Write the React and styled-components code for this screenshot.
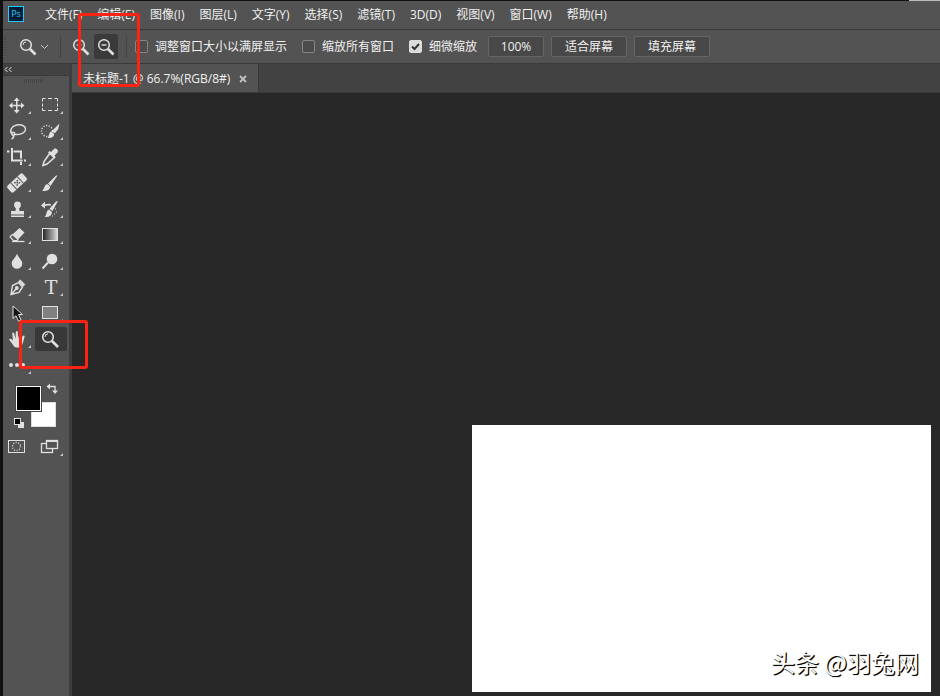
import React, { useState } from 'react'
import styled, { createGlobalStyle } from 'styled-components'

const GlobalStyle = createGlobalStyle`
  * {
    box-sizing: border-box;
  }

  body {
    margin: 0;
    background: #282828;
    color: #f0f0f0;
    font-family: 'Open Sans', 'Noto Sans CJK SC', sans-serif;
    font-size: 12px;
    line-height: 16px;
  }

  button {
    font: inherit;
    color: inherit;
    padding: 0;
    border: 0;
    background: none;
  }

  svg {
    display: block;
  }
`

const AppWindow = styled.div`
  display: flex;
  flex-direction: column;
  position: relative;
  min-height: 100vh;
  border-top: 1px solid #111;
  border-left: 3px solid #111;

  &::before {
    content: '';
    position: absolute;
    top: -1px;
    right: 0;
    width: 31px;
    height: 1px;
    background: #bbb;
  }
`

const MenuBar = styled.nav`
  display: flex;
  align-items: center;
  gap: 15px;
  height: 29px;
  padding: 0 5px 3px;
  background: #535353;
  border-bottom: 1px solid #3a3a3a;
`

const Logo = styled.div`
  width: 16px;
  height: 16px;
  margin-right: 6px;
  border: 1px solid #26c9ff;
  background: #001d33;
  color: #26c9ff;
  font-size: 9px;
  line-height: 14px;
  text-align: center;
`

const MenuItem = styled.button`
  padding-top: 2px;
  white-space: nowrap;
`

const OptionsBar = styled.div`
  display: flex;
  align-items: center;
  height: 34px;
  padding-left: 1px;
  background: #535353;
  border-bottom: 1px solid #3a3a3a;
`

const Grip = styled.div`
  width: 2px;
  height: 20px;
  background: repeating-linear-gradient(#444 0 1px, #5a5a5a 1px 2px);
`

const Separator = styled.div`
  width: 1px;
  height: 22px;
  margin: 0 8px;
  background: #434343;
`

const ZoomButtons = styled.div`
  display: flex;
  gap: 1px;
`

const IconButton = styled.button`
  display: flex;
  align-items: center;
  justify-content: center;
  width: ${props => props.$wide ? '46px' : '24px'};
  height: 25px;
  padding-left: ${props => props.$wide ? '12px' : '0'};
  border-radius: 2px;
  background: ${props => props.$active ? '#3a3a3a' : 'none'};
`

const Option = styled.label`
  display: flex;
  align-items: center;
  gap: 7px;
  margin-right: 15px;
  white-space: nowrap;
`

const Check = styled.input`
  appearance: none;
  width: 13px;
  height: 13px;
  margin: 0;
  border: 1px solid #858585;
  border-radius: 2px;
  background: #4c4c4c;

  &:checked {
    border-color: #dcdcdc;
    background: #dcdcdc url("data:image/svg+xml,%3Csvg xmlns='http://www.w3.org/2000/svg' viewBox='0 0 11 11'%3E%3Cpath d='M2 5.5l2.500 2.500L9 3' fill='none' stroke='%23333' stroke-width='2'/%3E%3C/svg%3E");
  }
`

const OptionButtons = styled.div`
  display: flex;
  gap: 7px;
  margin-left: -4px;
`

const OptionButton = styled.button`
  width: ${props => props.$small ? '56px' : '76px'};
  height: 21px;
  border: 1px solid #666;
  border-radius: 2px;
  background: #484848;
  line-height: 19px;
`

const Main = styled.div`
  display: flex;
  flex: 1;
`

const Sidebar = styled.aside`
  flex: none;
  width: 69px;
  background: #535353;
  border-right: 3px solid #3e3e3e;
`

const SidebarHeader = styled.button`
  display: flex;
  align-items: center;
  width: 100%;
  height: 12px;
  padding-left: 1px;
  background: #424242;
  border-bottom: 1px solid #3a3a3a;
`

const SidebarGrip = styled.div`
  width: 20px;
  height: 4px;
  margin: 3px 0 10px 21px;
  background: repeating-linear-gradient(90deg, #454545 0 1px, #535353 1px 2px);
`

const ToolGrid = styled.div`
  display: grid;
  grid-template-columns: 32px 32px;
  row-gap: 2px;
`

const ToolButton = styled.button`
  height: 24px;
  border-radius: 2px;
  background: ${props => props.$active ? '#383838' : 'none'};
`

const ColorArea = styled.div`
  position: relative;
  height: 58px;
`

const Swatch = styled.button`
  position: absolute;
  width: 25px;
  height: 25px;
  border: 1px solid ${props => props.$front ? '#fff' : '#ddd'};
  background: ${props => props.$front ? '#000' : '#fff'};
  left: ${props => props.$front ? '13px' : '28px'};
  top: ${props => props.$front ? '9px' : '25px'};
  outline: ${props => props.$front ? '1px solid #444' : 'none'};
`

const SwapButton = styled.button`
  position: absolute;
  left: 43px;
  top: 6px;
`

const ResetButton = styled.button`
  position: absolute;
  left: 11px;
  top: 41px;
`

const DocumentArea = styled.main`
  display: flex;
  flex-direction: column;
  flex: 1;
  min-width: 0;
`

const TabStrip = styled.div`
  display: flex;
  height: 29px;
  background: #424242;
  border-bottom: 1px solid #383838;
`

const Tab = styled.div`
  display: flex;
  align-items: center;
  gap: 9px;
  padding: 2px 11px 0;
  background: #535353;
  border-right: 1px solid #393939;
  white-space: nowrap;
`

const Workspace = styled.div`
  display: flex;
  flex: 1;
  align-items: flex-end;
  justify-content: flex-end;
  padding: 0 9px 4px;
  background: #282828;
`

const Artboard = styled.div`
  display: flex;
  align-items: flex-end;
  justify-content: flex-end;
  width: 54%;
  aspect-ratio: 459 / 267;
  padding: 12px;
  background: #fff;
`

const Watermark = styled.span`
  color: #fff;
  font-family: 'Noto Sans CJK SC', sans-serif;
  font-size: 24px;
  line-height: 36px;
  white-space: nowrap;
  text-shadow: 1px 1px 0 #000, 1px 1px 1px #000;
`

const Highlight = styled.div`
  position: absolute;
  left: ${props => props.$left}px;
  top: ${props => props.$top}px;
  width: ${props => props.$width}px;
  height: ${props => props.$height}px;
  border: 3px solid #fb2414;
  border-radius: 3px;
  pointer-events: none;
`

const menus = [
  '文件(F)', '编辑(E)', '图像(I)', '图层(L)', '文字(Y)', '选择(S)',
  '滤镜(T)', '3D(D)', '视图(V)', '窗口(W)', '帮助(H)'
]

const ink = '#e0e0e0'

const Magnifier = ({ sign }) => (
  <svg width="18" height="18" fill="none" stroke={ink}>
    <circle cx="7" cy="7" r="5.300" strokeWidth="1.500" />
    <path d="M11 11l5.500 5.500" strokeWidth="2.600" />
    {sign === 'plus' && <path d="M4.500 7h5M7 4.500v5" />}
    {sign === 'minus' && <path d="M4.500 7h5" strokeWidth="1.400" />}
    {!sign && <path d="M4 7a3 3 0 0 1 3-3" strokeWidth="1" />}
  </svg>
)

// every tool is drawn on the 32x24 face of its button
const tools = [
  ['移动', <g fill={ink}>
    <path d="M13 7h1.500v11H13zM8 11.700h11v1.500H8z" />
    <path d="M13.700 4.500l3 3.500h-6zM13.700 20.500l3-3.500h-6zM6 12.500l3.500-3v6zM21.500 12.500l-3.500-3v6z" />
  </g>],
  ['矩形选框', <path d="M7.500 8.500v-3h3M13 5.500h4M19.500 5.500h3v3M22.500 10.500v3M22.500 15v2.500h-3M17 17.500h-4M10.500 17.500h-3V15M7.500 13.500v-3" fill="none" stroke={ink} />],
  ['套索', <g fill="none" stroke={ink} strokeWidth="1.400">
    <path d="M9 15c-3-3-.5-8 4.500-9 5-1 9 1 9 4 0 4-6 6.500-12 5.200" />
    <path d="M9 15.500a1.500 1.500 0 1 1 2.500 0c-.8 1.200-2.500.5-2.500-.5zM11 16c0 2-1 3.500-2.500 4" />
  </g>],
  ['快速选择', <g>
    <circle cx="12" cy="12" r="5.500" fill="none" stroke={ink} strokeWidth="1.300" strokeDasharray="1.200 1.500" />
    <path d="M24.500 4.500l-1.500 6-3.500 4-2.500-2.500z" fill={ink} />
    <path d="M16.500 12.500l2.500 2.500c.5 3-3 4.500-6.500 4 2-1.500 1-6 4-6.500z" fill={ink} />
  </g>],
  ['裁剪', <g fill="none" stroke={ink} strokeWidth="2">
    <path d="M9 3v12.500h10.500M4 6.500h2.500M10.500 6.500h7.500v7M18 17v3M21 15.500h2" />
  </g>],
  ['吸管', <g>
    <path d="M15 8l4.500 4.500L12 19l-4 1.500 1-4z" fill="none" stroke={ink} strokeWidth="1.600" />
    <path d="M13 7.500l1.500-1.500 1.500 1 3-3c2-1.500 5 1.500 3.500 3.500l-3 3 1 1.500L19 13.500z" fill={ink} />
  </g>],
  ['修复画笔', <g transform="rotate(-43 14 12)">
    <rect x="3.500" y="7.500" width="21" height="9" rx="2" fill={ink} />
    <path d="M9.500 7.500v9M18.500 7.500v9" stroke="#535353" />
    <path d="M12 10.500h1.500M15 10.500h1.500M12 13.500h1.500M15 13.500h1.500M13.500 12H15" stroke="#444" strokeWidth="1.300" />
  </g>],
  ['画笔', <g fill={ink}>
    <path d="M22.500 4.500l-7 10.500-2.500-2.500 8-8z" />
    <path d="M12.500 13l2.500 2.500c.5 3.500-4 5-8 4.500 2.500-1.500 2-6.500 5.500-7z" />
  </g>],
  ['仿制图章', <g fill={ink}>
    <circle cx="14.500" cy="8" r="3.400" />
    <path d="M13 10h3l.5 4H21v3.500H8V14h4.500z" />
    <path d="M8 18.500h13V20H8z" />
  </g>],
  ['历史记录画笔', <g fill={ink}>
    <path d="M23 4l-5.500 10-3-2.200L21 4.500zM14 12.500l3 2.500c0 4-4 5.500-7.500 5 2.500-1.500 1.500-7 4.500-7.500z" />
    <path d="M6 8.500l4-4v2.800c3-.8 5-.8 6 0v1.500c-2-.6-4-.4-6 .2v2.500z" />
    <path d="M20 12h1M21 15h1M19 17h1M17 19h1" stroke={ink} />
  </g>],
  ['橡皮擦', <g>
    <path d="M16.500 5l5 4.500-6.500 7-5.500-5z" fill={ink} />
    <path d="M9.500 11.500l-2.500 2.500 3.500 3.500H14l1-1z" fill="none" stroke={ink} strokeWidth="1.200" />
    <path d="M9 18.500h12.500" stroke={ink} strokeWidth="1.300" />
  </g>],
  ['渐变', <g>
    <linearGradient id="ramp">
      <stop offset="0" stopColor="#222" />
      <stop offset="1" stopColor="#ddd" />
    </linearGradient>
    <rect x="7.500" y="5.500" width="15" height="12" fill="url(#ramp)" stroke={ink} />
  </g>],
  ['模糊', <path d="M14 4.500c1 4 5.300 6.500 5.300 10a5.200 5.200 0 0 1-10.600 0c0-3.500 4.300-6 5.300-10z" fill={ink} />],
  ['减淡', <g>
    <circle cx="17" cy="10" r="5.300" fill={ink} />
    <path d="M13 13.500l-5.500 6" stroke={ink} strokeWidth="2" />
  </g>],
  ['钢笔', <g fill="none" stroke={ink} strokeWidth="1.400">
    <path d="M8 19.500l1.500-9 6-3 4 4.500-3.500 5.500zM8 19.500l5.500-6" />
    <path d="M15.500 6.500l1.700-1.800 4.800 4.800-2 2z" fill={ink} strokeWidth="0.500" />
    <circle cx="13.800" cy="13" r="1.200" fill={ink} />
  </g>],
  ['文字', <text x="16" y="19" textAnchor="middle" fontFamily="DejaVu Serif" fontSize="19" fill={ink}>T</text>],
  ['路径选择', <path d="M10 5v12.500l3-2.800 2.500 5.500 2.500-1.200-2.500-5.500h4z" fill="#151515" stroke={ink} />],
  ['矩形', <rect x="7.500" y="5.500" width="15" height="12" fill="#808080" stroke={ink} />],
  ['抓手', <path d="M11 19.500c-1.500-2-3-5-5-7 .5-1.500 2.500-.8 4 1L9.200 6.500c0-1.500 1.600-1.500 2 0l1.300 5.500L12.800 5c.2-1.500 2-1.500 2 0l.2 7 1.500-6c.4-1.500 2-1 1.800.3L17.500 13l2.300-4c.8-1.200 2.200-.4 1.700 1-1 3-1.500 7-3.500 9.500-1.500 1.300-5.500 1.300-7 0z" fill={ink} />],
  ['缩放', <g fill="none" stroke={ink}>
    <circle cx="13" cy="10" r="5.300" strokeWidth="1.600" />
    <path d="M17 14l6 6" strokeWidth="2.600" />
    <path d="M10 10a3 3 0 0 1 3-3" />
  </g>],
  ['编辑工具栏', <g fill={ink}>
    <circle cx="8" cy="12" r="2" />
    <circle cx="14" cy="12" r="2" />
    <circle cx="20" cy="12" r="2" />
  </g>]
]

const modes = [
  ['快速蒙版', <g fill="none" stroke={ink}>
    <rect x="5.500" y="5.500" width="16" height="12" />
    <circle cx="13.500" cy="11.500" r="4" strokeWidth="1.400" strokeDasharray="1 1.500" />
  </g>],
  ['屏幕模式', <g stroke={ink} strokeWidth="1.300">
    <rect x="6.500" y="8.500" width="11" height="9" fill="none" />
    <rect x="11.500" y="5.500" width="11" height="8" fill="#535353" />
    <path d="M11 6h12" strokeWidth="2" />
  </g>]
]

const Tool = ({ label, active, corner = true, onClick, children }) => (
  <ToolButton aria-label={label} $active={active} onClick={onClick}>
    <svg width="32" height="24">
      {children}
      {corner && <path d="M28 18v3h-3z" fill="#c8c8c8" />}
    </svg>
  </ToolButton>
)

const App = () => {
  const [tool, setTool] = useState('缩放')

  return (
    <>
      <GlobalStyle />
      <AppWindow>
        <MenuBar>
          <Logo>Ps</Logo>
          {menus.map(menu => <MenuItem key={menu}>{menu}</MenuItem>)}
        </MenuBar>

        <OptionsBar>
          <Grip />
          <IconButton $wide aria-label="缩放工具">
            <Magnifier />
            <svg width="14" height="8" fill="none" stroke="#c8c8c8">
              <path d="M4 2l3.500 3.500L11 2" />
            </svg>
          </IconButton>
          <Separator />
          <ZoomButtons>
            <IconButton aria-label="放大"><Magnifier sign="plus" /></IconButton>
            <IconButton $active aria-label="缩小"><Magnifier sign="minus" /></IconButton>
          </ZoomButtons>
          <Separator />
          <Option><Check type="checkbox" />调整窗口大小以满屏显示</Option>
          <Option><Check type="checkbox" />缩放所有窗口</Option>
          <Option><Check type="checkbox" defaultChecked />细微缩放</Option>
          <OptionButtons>
            <OptionButton $small>100%</OptionButton>
            <OptionButton>适合屏幕</OptionButton>
            <OptionButton>填充屏幕</OptionButton>
          </OptionButtons>
        </OptionsBar>

        <Main>
          <Sidebar>
            <SidebarHeader aria-label="折叠">
              <svg width="9" height="7" fill="none" stroke={ink}>
                <path d="M3.500 1L1 3.500 3.500 6M7.500 1L5 3.500 7.500 6" />
              </svg>
            </SidebarHeader>
            <SidebarGrip />
            <ToolGrid>
              {tools.map(([label, icon]) => (
                <Tool
                  key={label}
                  label={label}
                  active={tool === label}
                  corner={label !== '缩放'}
                  onClick={() => setTool(label)}
                >
                  {icon}
                </Tool>
              ))}
            </ToolGrid>
            <ColorArea>
              <Swatch aria-label="背景色" />
              <Swatch $front aria-label="前景色" />
              <SwapButton aria-label="切换颜色">
                <svg width="12" height="12">
                  <path d="M3 3.500h6v5" fill="none" stroke={ink} strokeWidth="1.300" />
                  <path d="M4 .5v6l-3.500-3zM6 7.500h6L9 11z" fill={ink} />
                </svg>
              </SwapButton>
              <ResetButton aria-label="默认颜色">
                <svg width="10" height="10">
                  <rect x="4" y="4" width="6" height="6" fill={ink} />
                  <rect x=".5" y=".5" width="6" height="6" fill="#000" stroke={ink} />
                </svg>
              </ResetButton>
            </ColorArea>
            <ToolGrid>
              {modes.map(([label, icon], i) => (
                <Tool key={label} label={label} corner={i === 1}>{icon}</Tool>
              ))}
            </ToolGrid>
          </Sidebar>

          <DocumentArea>
            <TabStrip>
              <Tab>
                未标题-1 @ 66.7%(RGB/8#)
                <button aria-label="关闭">
                  <svg width="8" height="8" stroke="#c0c0c0" strokeWidth="1.800">
                    <path d="M1 1l6 6M7 1L1 7" />
                  </svg>
                </button>
              </Tab>
            </TabStrip>
            <Workspace>
              <Artboard>
                <Watermark>头条 @羽兔网</Watermark>
              </Artboard>
            </Workspace>
          </DocumentArea>
        </Main>

        <Highlight $left={75} $top={12} $width={62} $height={74} />
        <Highlight $left={16} $top={319} $width={69} $height={49} />
      </AppWindow>
    </>
  )
}

export default App
